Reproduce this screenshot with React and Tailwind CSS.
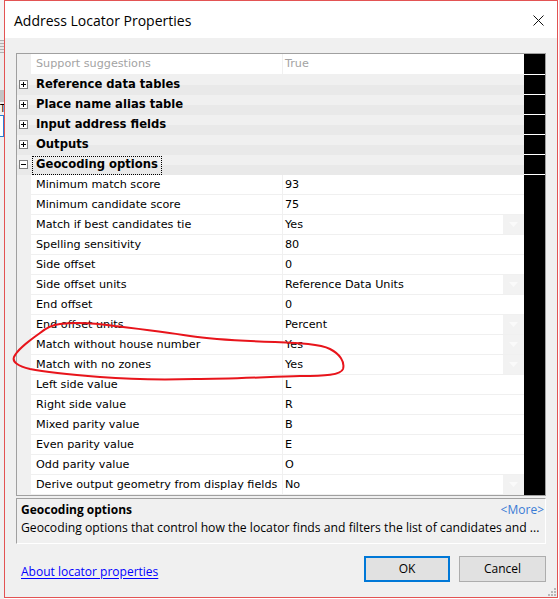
import React from "react";

const rows = [
  { t: "p", name: "Support suggestions", value: "True", disabled: true, first: true },
  { t: "c", name: "Reference data tables" },
  { t: "c", name: "Place name alias table" },
  { t: "c", name: "Input address fields" },
  { t: "c", name: "Outputs" },
  { t: "c", name: "Geocoding options", open: true, focus: true },
  { t: "p", name: "Minimum match score", value: "93" },
  { t: "p", name: "Minimum candidate score", value: "75" },
  { t: "p", name: "Match if best candidates tie", value: "Yes", dd: true },
  { t: "p", name: "Spelling sensitivity", value: "80" },
  { t: "p", name: "Side offset", value: "0" },
  { t: "p", name: "Side offset units", value: "Reference Data Units", dd: true },
  { t: "p", name: "End offset", value: "0" },
  { t: "p", name: "End offset units", value: "Percent", dd: true },
  { t: "p", name: "Match without house number", value: "Yes", dd: true },
  { t: "p", name: "Match with no zones", value: "Yes", dd: true },
  { t: "p", name: "Left side value", value: "L" },
  { t: "p", name: "Right side value", value: "R" },
  { t: "p", name: "Mixed parity value", value: "B" },
  { t: "p", name: "Even parity value", value: "E" },
  { t: "p", name: "Odd parity value", value: "O" },
  { t: "p", name: "Derive output geometry from display fields", value: "No", dd: true },
];

function Expander({ open }) {
  return (
    <span className="relative flex h-[9px] w-[9px] items-center justify-center border border-[#808080] bg-white">
      <span className="absolute h-[1px] w-[5px] bg-black" />
      {!open && <span className="absolute h-[5px] w-[1px] bg-black" />}
    </span>
  );
}

function Row({ r, idx }) {
  const h = r.first ? "h-[21px]" : "h-[20px]";
  const blackLine = idx <= 5 ? "border-b border-white" : "";
  if (r.t === "c") {
    return (
      <div className={`flex ${h}`}>
        <div className="flex w-[507px] bg-[linear-gradient(to_bottom,#f0f0f0_50%,#e9e9e9_50%)]">
          <div className="flex w-[14px] items-center pl-[2px] pb-[1px]">
            <Expander open={r.open} />
          </div>
          <div className="flex items-center">
            {r.focus ? (
              <span className="ml-[1px] flex h-[19px] items-center border border-dotted border-black pl-[3px] pr-[3px] text-[11.6px] font-bold text-black">
                {r.name}
              </span>
            ) : (
              <span className="pl-[5px] text-[11.6px] font-bold text-black">{r.name}</span>
            )}
          </div>
        </div>
        <div className={`w-[21px] bg-black ${blackLine}`} />
      </div>
    );
  }
  const color = r.disabled ? "text-[#a3a3a3]" : "text-black";
  return (
    <div className={`flex ${h}`}>
      <div className="w-[14px] bg-[#f0f0f0]" />
      <div className={`flex w-[252px] items-center border-b border-r border-[#f0f0f0] bg-white pl-[5px] text-[11.2px] ${color}`}>
        <span className="whitespace-nowrap">{r.name}</span>
      </div>
      <div className={`flex w-[241px] border-b border-[#f0f0f0] bg-white text-[11.2px] ${color}`}>
        <div className="flex flex-1 items-center pl-[2px] whitespace-nowrap">{r.value}</div>
        {r.dd && (
          <div className="flex w-[21px] items-center justify-center bg-[#f2f2f2]">
            <svg width="9" height="5" viewBox="0 0 9 5">
              <path d="M0 0 L9 0 L4.5 5 Z" fill="#fafafa" />
            </svg>
          </div>
        )}
      </div>
      <div className={`w-[21px] bg-black ${blackLine}`} />
    </div>
  );
}

function Grip() {
  const dots = [
    [6, 0],
    [3, 3],
    [6, 3],
    [0, 6],
    [3, 6],
    [6, 6],
  ];
  return (
    <svg width="8" height="8" viewBox="0 0 8 8">
      {dots.map(([x, y], i) => (
        <rect key={i} x={x} y={y} width="2" height="2" fill="#b8b8b8" />
      ))}
    </svg>
  );
}

export default function App() {
  return (
    <div className="relative flex h-[599px] w-[559px] overflow-hidden bg-white">
      {/* sliver of window behind */}
      <div className="flex w-[4px] flex-col bg-[#e8e8e8]">
        <div className="h-[40px] bg-[#f4f4f4]" />
        <div className="h-[13px] bg-[repeating-linear-gradient(to_bottom,#b0b0b0_0px,#b0b0b0_1px,#e8e8e8_1px,#e8e8e8_3px)]" />
        <div className="h-[37px] bg-[#ececec]" />
        <div className="h-[12px] bg-[#c4c4c4]" />
        <div className="h-[13px] bg-[#f0f0f0] text-[10px] leading-[13px] text-black">T</div>
        <div className="h-[22px] border-y border-r border-[#2a7fd4] bg-white" />
        <div className="flex-1 bg-[#f0f0f0]" />
      </div>

      {/* dialog window */}
      <div className="flex h-[598px] w-[554px] flex-col border border-[#e35353] bg-[#f0f0f0]">
        {/* title bar */}
        <div className="flex h-[37px] items-center justify-between bg-white pl-[9px] pr-[13px]">
          <span className="pt-[1px] font-['Open_Sans',sans-serif] text-[14px] text-black">
            Address Locator Properties
          </span>
          <svg width="11" height="11" viewBox="0 0 11 11" className="mt-[1px]">
            <path d="M0.5 0.5 L10.5 10.5 M10.5 0.5 L0.5 10.5" stroke="#111" strokeWidth="1" />
          </svg>
        </div>

        {/* body */}
        <div className="flex flex-1 flex-col px-[11px]">
          {/* property grid */}
          <div className="mt-[15px] w-[530px] border border-[#a0a0a0] font-['DejaVu_Sans',sans-serif] leading-none">
            {rows.map((r, i) => (
              <Row key={i} r={r} idx={i} />
            ))}
          </div>

          {/* description */}
          <div className="mt-[2px] flex h-[46px] w-[530px] flex-col border-l border-t border-b border-r border-l-[#a0a0a0] border-t-[#a0a0a0] border-b-white border-r-white pl-[4px] pr-[1px] font-['Open_Sans',sans-serif]">
            <div className="flex h-[21px] items-center justify-between pt-[1px]">
              <span className="text-[12px] font-bold text-black">Geocoding options</span>
              <span className="text-[12px] text-[#3a7bd5]">&lt;More&gt;</span>
            </div>
            <div className="flex h-[17px] items-center whitespace-nowrap text-[12.2px] text-black">
              Geocoding options that control how the locator finds and filters the list of candidates and ...
            </div>
          </div>

          {/* footer */}
          <div className="mt-[12px] flex h-[26px] w-[530px] items-center justify-between font-['Open_Sans',sans-serif] text-[12px]">
            <a className="ml-[5px] mt-[6px] text-[#0000ff] underline underline-offset-2">About locator properties</a>
            <div className="flex gap-[9px]">
              <button className="flex h-[26px] w-[86px] items-center justify-center border-2 border-[#0078d7] bg-[#e1e1e1] text-black">
                OK
              </button>
              <button className="flex h-[26px] w-[87px] items-center justify-center border border-[#adadad] bg-[#e1e1e1] text-black">
                Cancel
              </button>
            </div>
          </div>
          <div className="flex flex-1 items-end justify-end pb-[1px] pr-[0px] -mr-[10px]">
            <Grip />
          </div>
        </div>
      </div>

      <div className="w-[1px] bg-white" />

      {/* hand-drawn red annotation */}
      <svg
        className="pointer-events-none absolute left-0 top-0"
        width="559"
        height="599"
        viewBox="0 0 559 599"
      >
        <path
          d="M40 333 C46 328, 52 325, 60 324 C75 322, 95 323, 115 326 C140 329, 165 332, 190 336 C215 340, 245 341, 275 342 C300 343, 320 344, 330 349 C340 354, 345 362, 343 369 C341 375, 325 376, 300 376 C265 377, 230 379, 195 379 C160 380, 125 379, 100 377 C75 375, 50 373, 30 369 C18 366, 12 362, 14 357 C17 350, 26 343, 40 333"
          fill="none"
          stroke="#e8141b"
          strokeWidth="2"
          strokeLinecap="round"
          strokeLinejoin="round"
        />
      </svg>
    </div>
  );
}
